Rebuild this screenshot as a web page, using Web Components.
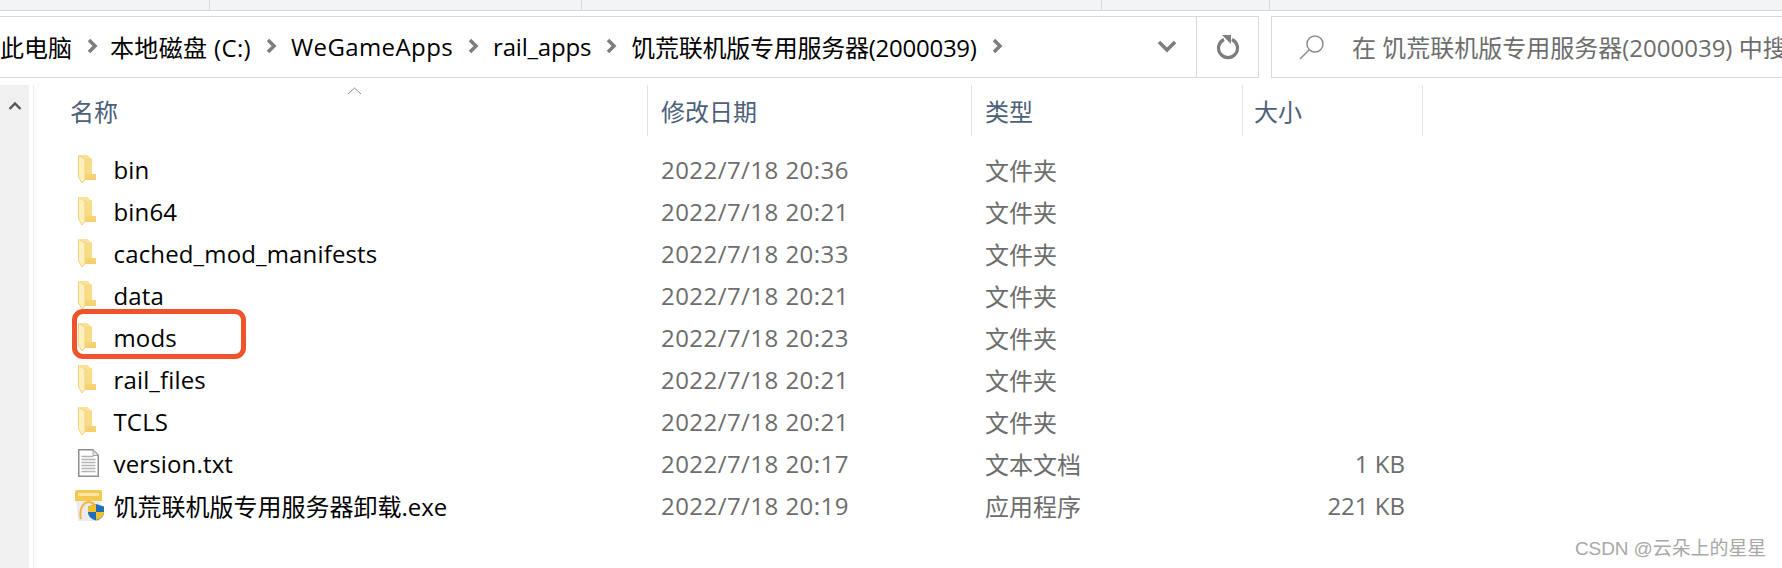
<!DOCTYPE html>
<html>
<head>
<meta charset="utf-8">
<style>
  html, body { margin: 0; height: 100%; background: #fff; overflow: hidden; }
  body { font-family: "Open Sans", "Noto Sans CJK SC", sans-serif; }
</style>
</head>
<body>
<explorer-window>
  <address-bar></address-bar>
  <file-list></file-list>
</explorer-window>
<script>
const ICONS = {
  folder: `<svg width="19" height="28" viewBox="0 0 19 28">
    <defs><linearGradient id="f" x1="0" y1="0" x2="0" y2="1"><stop offset="0" stop-color="#fbe39a"/><stop offset="1" stop-color="#f5cf6c"/></linearGradient></defs>
    <path d="M1 0h9l2 3h2v16h4v6H6V4z" fill="url(#f)"/>
    <path d="M7 4h7v15h-7z" fill="#f8dc88"/>
    <path d="M0.500 0.500L7 4v21l-3 3-3.500-6z" fill="#fdf0bd" stroke="#efd27f"/>
  </svg>`,
  file: `<svg width="21" height="28" viewBox="0 0 21 28">
    <path d="M.75.75h14l5.500 5.500v21H.75z" fill="#fff" stroke="#8e8e8e" stroke-width="1.500"/>
    <path d="M15 1v5.500h5" fill="#e4e4e4" stroke="#a5a5a5"/>
    <path d="M3.500 7.500h12M3.500 10.500h14M3.500 13.500h14M3.500 16.500h14M3.500 19.500h14M3.500 22.500h14" stroke="#b5b5b5" stroke-width="1.500"/>
  </svg>`,
  exe: `<svg width="29" height="31" viewBox="0 0 29 31">
    <path d="M1 8h25l-1 23H3z" fill="#ececec"/>
    <path d="M0 2q0-2 2-2h23q2 0 2 2v9H0z" fill="#f5c94f"/>
    <path d="M3 3h21v3H3z" fill="#fbe5a8"/>
    <path d="M6 29c-2-8 1-16 7-17 3 0 5 1 7 3" fill="none" stroke="#f2b544" stroke-width="2"/>
    <path d="M21 14l8 2.500v6c0 4-4 7-8 8-4-1-8-4-8-8v-6z" fill="#1f6fb8"/>
    <path d="M21 14v8h-8v-5.500zM21 22h8c0 4-4 7-8 8z" fill="#f5bf2e"/>
  </svg>`
};

class ExplorerWindow extends HTMLElement {
  constructor() {
    super();
    this.attachShadow({ mode: 'open' }).innerHTML = `
      <style>
        :host { display: flex; flex-direction: column; position: relative; height: 568px; overflow: hidden; }
        .tabs { height: 10px; background: #f3f4f6; border-bottom: 1px solid #d9d9d9; display: flex; flex: none; }
        .tabs i { width: 1px; background: #dcdcdc; margin-left: 209px; }
        .tabs i:nth-child(2) { margin-left: 371px; }
        .tabs i:nth-child(3) { margin-left: 519px; }
        .tabs i:nth-child(4) { margin-left: 167px; }
        .gap { height: 5px; flex: none; }
        .mark {
          position: absolute; left: 1575px; top: 537px;
          font: 19px/24px "Liberation Sans", "Noto Sans CJK SC", sans-serif;
          color: #a8a8a8; white-space: nowrap; letter-spacing: -.1px;
        }
        .hl {
          position: absolute; left: 72px; top: 309px; width: 174px; height: 50px; box-sizing: border-box;
          border: 5px solid #f0532a; border-radius: 11px;
        }
      </style>
      <div class="tabs"><i></i><i></i><i></i><i></i></div>
      <div class="gap"></div>
      <slot></slot>
      <div class="hl"></div>
      <div class="mark">CSDN @云朵上的星星</div>`;
  }
}

class AddressBar extends HTMLElement {
  constructor() {
    super();
    const crumbs = ['此电脑', '本地磁盘 (C:)', 'WeGameApps', 'rail_apps', '饥荒联机版专用服务器(2000039)'];
    const sep = `<svg class="sep" width="12" height="16" viewBox="0 0 12 16"><path d="M3 2l6 6-6 6" fill="none" stroke="#7d7d7d" stroke-width="3.500"/></svg>`;
    this.attachShadow({ mode: 'open' }).innerHTML = `
      <style>
        :host { display: flex; flex: none; height: 62px; gap: 12px; font-size: 24px; color: #000; }
        .path { flex: none; width: 1259px; box-sizing: border-box; display: flex; border: 1px solid #d9d9d9; border-left: 0; }
        .crumbs { flex: 1; display: flex; align-items: center; gap: 14px; white-space: nowrap; overflow: hidden; padding-bottom: 2px; }
        .crumbs span:nth-of-type(2) { letter-spacing: .35px; margin-left: -2px; }
        .crumbs span:nth-of-type(3) { letter-spacing: .4px; }
        .crumbs span:nth-of-type(4) { letter-spacing: -.2px; }
        .crumbs span:nth-of-type(5) { letter-spacing: -.25px; }
        .sep { flex: none; }
        .drop { width: 75px; display: flex; align-items: center; justify-content: center; padding-left: 16px; box-sizing: border-box; }
        .refresh { width: 61px; display: flex; align-items: center; justify-content: center; border-left: 1px solid #d9d9d9; }
        .search { flex: 1; box-sizing: border-box; border: 1px solid #d9d9d9; border-right: 0; display: flex; align-items: center; padding-left: 27px; gap: 27px; color: #6d6d6d; white-space: nowrap; overflow: hidden; }
        .search span { position: relative; top: -1px; }
        svg { flex: none; }
      </style>
      <div class="path">
        <div class="crumbs">${crumbs.map((c) => `<span>${c}</span>${sep}`).join('')}</div>
        <div class="drop"><svg width="20" height="14" viewBox="0 0 20 14"><path d="M2 2l8 8 8-8" fill="none" stroke="#7d7d7d" stroke-width="3.500"/></svg></div>
        <div class="refresh"><svg width="24" height="26" viewBox="0 0 24 26"><path d="M8 5.500a9.500 9.500 0 1 0 8 0" fill="none" stroke="#7d7d7d" stroke-width="3.200"/><path d="M6 1h9v9z" fill="#7d7d7d"/></svg></div>
      </div>
      <div class="search">
        <svg width="26" height="26" viewBox="0 0 26 26"><circle cx="16" cy="10" r="8" fill="none" stroke="#8a8a8a" stroke-width="1.500"/><path d="M10 16L1 25" stroke="#8a8a8a" stroke-width="1.500"/></svg>
        <span>在 饥荒联机版专用服务器(2000039) 中搜索</span>
      </div>`;
  }
}

class FileRow extends HTMLElement {
  constructor() {
    super();
    this.attachShadow({ mode: 'open' });
  }

  connectedCallback() {
    const d = this.dataset;
    this.shadowRoot.innerHTML = `
      <style>
        :host { display: grid; grid-template-columns: 660px 324px 270px 150px; height: 42px; align-items: center; white-space: nowrap; font-size: 24px; color: #6d6d6d; }
        .name { display: flex; align-items: center; color: #000; letter-spacing: ${d.icon === 'exe' ? '0' : '.15px'}; }
        .ic { width: 112.500px; flex: none; display: flex; align-items: center; padding-left: 77px; box-sizing: border-box; }
        .ic svg { flex: none; margin-left: ${d.icon === 'exe' ? '-3px' : '0'}; }
        .date { letter-spacing: .45px; }
        .size { text-align: right; }
      </style>
      <div class="name"><span class="ic">${ICONS[d.icon]}</span><slot></slot></div>
      <div class="date">${d.date}</div>
      <div>${d.type}</div>
      <div class="size">${d.size || ''}</div>`;
  }
}

class FileList extends HTMLElement {
  constructor() {
    super();
    this.attachShadow({ mode: 'open' }).innerHTML = `
      <style>
        :host { display: flex; flex: 1; padding-top: 7px; }
        .rail { width: 29px; background: #f0f0f0; display: flex; justify-content: center; padding-top: 16px; box-sizing: border-box; flex: none; }
        .line { width: 1px; background: #ececec; margin-left: 4px; flex: none; }
        .main { flex: 1; min-width: 0; }
        .head { height: 51px; display: grid; grid-template-columns: 614px 324px 271px 180px; font-size: 24px; color: #4c607a; position: relative; margin-bottom: 12px; }
        .head div { border-right: 1px solid #e3e3e3; display: flex; align-items: center; padding-left: 36px; box-sizing: border-box; }
        .head div + div { padding-left: 13px; }
        .head .size { padding-left: 11px; }
        .sort { position: absolute; left: 313px; top: 2px; }
      </style>
      <div class="rail"><svg width="14" height="10" viewBox="0 0 14 10"><path d="M1.500 8l5.500-5.500L12.500 8" fill="none" stroke="#555" stroke-width="2.400"/></svg></div>
      <div class="line"></div>
      <div class="main">
        <div class="head">
          <div>名称</div><div>修改日期</div><div>类型</div><div class="size">大小</div>
          <svg class="sort" width="15" height="8" viewBox="0 0 15 8"><path d="M1 7l6.500-6L14 7" fill="none" stroke="#8a8a8a"/></svg>
        </div>
        <file-rows></file-rows>
      </div>`;
  }
}

class FileRows extends HTMLElement {
  constructor() {
    super();
    const rows = [
      ['folder', 'bin', '2022/7/18 20:36', '文件夹', ''],
      ['folder', 'bin64', '2022/7/18 20:21', '文件夹', ''],
      ['folder', 'cached_mod_manifests', '2022/7/18 20:33', '文件夹', ''],
      ['folder', 'data', '2022/7/18 20:21', '文件夹', ''],
      ['folder', 'mods', '2022/7/18 20:23', '文件夹', ''],
      ['folder', 'rail_files', '2022/7/18 20:21', '文件夹', ''],
      ['folder', 'TCLS', '2022/7/18 20:21', '文件夹', ''],
      ['file', 'version.txt', '2022/7/18 20:17', '文本文档', '1 KB'],
      ['exe', '饥荒联机版专用服务器卸载.exe', '2022/7/18 20:19', '应用程序', '221 KB']
    ];
    this.attachShadow({ mode: 'open' }).innerHTML = `
      <style>
        :host { display: block; margin-left: -33px; }
      </style>
      ${rows.map(([icon, name, date, type, size]) => `<file-row data-icon="${icon}" data-date="${date}" data-type="${type}" data-size="${size}">${name}</file-row>`).join('')}`;
  }
}

customElements.define('explorer-window', ExplorerWindow);
customElements.define('address-bar', AddressBar);
customElements.define('file-list', FileList);
customElements.define('file-rows', FileRows);
customElements.define('file-row', FileRow);
</script>
</body>
</html>
